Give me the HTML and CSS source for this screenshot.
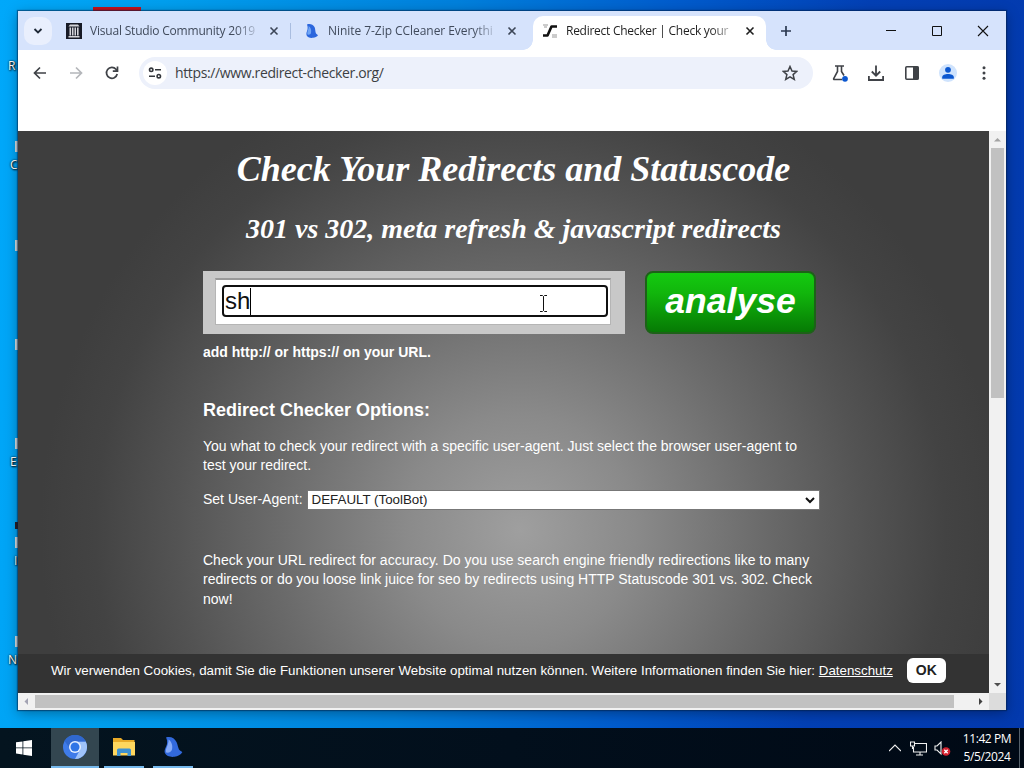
FILE: index.html
```
<!DOCTYPE html>
<html lang="en">
<head>
	<meta charset="utf-8">
	<title>Redirect Checker | Check your redirects</title>
	<link rel="stylesheet" href="styles.css">
</head>
<body>
	<div class="desktop">
		<div class="red-line"></div>
		<span class="label" style="top:58px;left:8px">R</span>
		<span class="label" style="top:157px;left:10px">C</span>
		<span class="label" style="top:454px;left:10px">E</span>
		<span class="label" style="top:553px;left:14px">I</span>
		<span class="label" style="top:652px;left:8px">N</span>
		<i class="sliver" style="top:141px"></i>
		<i class="sliver" style="top:240px"></i>
		<i class="sliver" style="top:339px"></i>
		<i class="sliver" style="top:438px"></i>
		<i class="sliver" style="top:537px"></i>
		<i class="sliver" style="top:636px"></i>
		<i class="sliver dark" style="top:522px"></i>

		<div class="window">
			<div class="tabs">
				<div class="tab-search"><svg width="10" height="10" viewBox="0 0 10 10"><path d="M1.5 3l3.500 3.500L8.500 3" fill="none" stroke="#1f2937" stroke-width="1.800"/></svg></div>
				<div class="tab tab1">
					<svg width="16" height="16" viewBox="0 0 16 16"><rect width="16" height="16" fill="#171a26"/><path d="M4 1.500h8l1.500 2h-11zM3.500 4.500h1.600v8H3.500zM6 4.500h1.500v8H6zM8.500 4.500H10v8H8.500zM11 4.500h1.600v8H11zM2.500 13h11v1.500h-11z" fill="#d5d5da"/></svg>
					<span class="title">Visual Studio Community 2019</span>
					<svg class="x" width="10" height="10" viewBox="0 0 10 10"><path d="M1.500 1.500l7 7M8.500 1.500l-7 7" stroke="#3c4657" stroke-width="1.600"/></svg>
				</div>
				<div class="tab tab2">
					<svg width="16" height="16" viewBox="0 0 16 16"><path d="M3 1.500C6 .5 9 1.500 10.500 4c.8 1.500.8 4.500 1.300 6 .4 1 1.700 1.500 2.200 2.200-1 1.500-3 2.300-5 2.600-3 .4-5.500-.5-6.300-2.300-.9-2 .3-4 .8-6C3.900 4.500 3.500 3 3 1.500z" fill="#2b66dd"/><path d="M4.500 3c2 1 3.200 4 2.500 7-.3 1.500-2 2-3.500 1.500C2.500 9 5.200 6 4.500 3z" fill="#6fa5f5"/></svg>
					<span class="title">Ninite 7-Zip CCleaner Everythi</span>
					<svg class="x" width="10" height="10" viewBox="0 0 10 10"><path d="M1.500 1.500l7 7M8.500 1.500l-7 7" stroke="#3c4657" stroke-width="1.600"/></svg>
				</div>
				<div class="tab tab3 active">
					<svg width="16" height="16" viewBox="0 0 16 16"><path d="M1 12.500h4.500L9.500 3.500H15" fill="none" stroke="#111" stroke-width="2.600" stroke-linejoin="round"/><path d="M1 2h5M2 4h3M10 12h5M10 14h5" stroke="#999" stroke-width="1.200"/></svg>
					<span class="title">Redirect Checker | Check your</span>
					<svg class="x" width="10" height="10" viewBox="0 0 10 10"><path d="M1.500 1.500l7 7M8.500 1.500l-7 7" stroke="#1f1f1f" stroke-width="1.600"/></svg>
				</div>
				<svg class="plus" width="12" height="12" viewBox="0 0 12 12"><path d="M6 1v10M1 6h10" stroke="#2c3a50" stroke-width="1.700"/></svg>
				<div class="controls">
					<svg width="12" height="12" viewBox="0 0 12 12"><path d="M1 5.500h10" stroke="#111"/></svg>
					<svg width="12" height="12" viewBox="0 0 12 12"><path d="M1.500 1.500h9v9h-9z" fill="none" stroke="#111"/></svg>
					<svg width="12" height="12" viewBox="0 0 12 12"><path d="M1 1l10 10M11 1L1 11" stroke="#111" stroke-width="1.100"/></svg>
				</div>
			</div>

			<div class="toolbar">
				<svg width="16" height="16" viewBox="0 0 16 16"><path d="M14 8H3M8 2.500L2.500 8 8 13.500" fill="none" stroke="#3f4247" stroke-width="1.700"/></svg>
				<svg width="16" height="16" viewBox="0 0 16 16"><path d="M2 8h11M8 2.500l5.500 5.500L8 13.500" fill="none" stroke="#b4b6ba" stroke-width="1.700"/></svg>
				<svg width="16" height="16" viewBox="0 0 16 16"><path d="M13.200 9A5.400 5.400 0 1 1 12 4.300L13.400 5.700M13.500 1.500v4.700H8.800" fill="none" stroke="#3f4247" stroke-width="1.700"/></svg>
				<div class="address">
					<div class="site-info"><svg width="14" height="14" viewBox="0 0 14 14"><g fill="none" stroke="#33363b" stroke-width="1.600"><circle cx="3.200" cy="3.800" r="1.700"/><path d="M7 3.800h6M1 10.200h6"/><circle cx="10.800" cy="10.200" r="1.700"/></g></svg></div>
					<span class="url">https://www.redirect-checker.org/</span>
					<svg width="16" height="16" viewBox="0 0 16 16"><path d="M8 1.500l2 4.500 4.800.4-3.700 3.200 1.200 4.800L8 11.900l-4.300 2.500 1.200-4.800L1.200 6.400 6 6z" fill="none" stroke="#3f4247" stroke-width="1.500"/></svg>
				</div>
				<div class="actions">
					<svg width="18" height="18" viewBox="0 0 18 18"><path d="M4 2h9M6.500 2v5.500L2.700 14.500q-.4 1 .7 1H11M10.500 2v5.500l2.500 4" fill="none" stroke="#3f4247" stroke-width="1.600"/><circle cx="14" cy="14.800" r="2.900" fill="#0b57d0"/></svg>
					<svg width="18" height="18" viewBox="0 0 18 18"><path d="M9 1.500v10M4.800 7.500L9 11.700l4.200-4.200M1.900 12v4h14.200v-4" fill="none" stroke="#3f4247" stroke-width="1.800"/></svg>
					<svg width="18" height="18" viewBox="0 0 18 18"><rect x="2.800" y="2.800" width="12.400" height="12.400" rx="1" fill="none" stroke="#3f4247" stroke-width="1.600"/><path d="M10 2.500h5.500v13H10z" fill="#3f4247"/></svg>
					<svg width="18" height="18" viewBox="0 0 18 18"><circle cx="9" cy="9" r="9" fill="#cfe3fd"/><circle cx="9" cy="5.800" r="2.900" fill="#0b57d0"/><path d="M3.200 14.800v-1.500c0-4.300 11.600-4.300 11.600 0v1.500z" fill="#0b57d0"/></svg>
					<svg width="18" height="18" viewBox="0 0 18 18"><g fill="#3f4247"><circle cx="9" cy="3.700" r="1.500"/><circle cx="9" cy="9" r="1.500"/><circle cx="9" cy="14.300" r="1.500"/></g></svg>
				</div>
			</div>

			<div class="view">
				<div class="page">
					<div class="content">
						<h1>Check Your Redirects and Statuscode</h1>
						<h2>301 vs 302, meta refresh &amp; javascript redirects</h2>
						<div class="form">
							<div class="field"><div class="field-inner"><div class="input">sh<span class="caret"></span>
								<svg class="mouse" width="9" height="17" viewBox="0 0 9 17"><path d="M1 .5h2.500l1 1 1-1H8M4.500 1.500v14M1 16.500h2.500l1-1 1 1H8" fill="none" stroke="#111"/></svg>
							</div></div></div>
							<div class="analyse">analyse</div>
						</div>
						<div class="note">add http:// or https:// on your URL.</div>
						<h3>Redirect Checker Options:</h3>
						<p>You what to check your redirect with a specific user-agent. Just select the browser user-agent to<br>test your redirect.</p>
						<div class="agent">
							<span>Set User-Agent:</span>
							<div class="select">DEFAULT (ToolBot)<svg width="10" height="8" viewBox="0 0 10 8"><path d="M1 2l4 4 4-4" fill="none" stroke="#111" stroke-width="2"/></svg></div>
						</div>
						<p>Check your URL redirect for accuracy. Do you use search engine friendly redirections like to many<br>redirects or do you loose link juice for seo by redirects using HTTP Statuscode 301 vs. 302. Check<br>now!</p>
					</div>
					<div class="cookies">
						<span class="cookie-text">Wir verwenden Cookies, damit Sie die Funktionen unserer Website optimal nutzen können. Weitere Informationen finden Sie hier: <a>Datenschutz</a></span>
						<span class="ok">OK</span>
					</div>
				</div>
				<div class="vscroll">
					<svg width="17" height="17" viewBox="0 0 17 17"><path d="M5 10.500L8.500 7l3.500 3.500z" fill="#a3a3a3"/></svg>
					<div class="vthumb"></div>
					<svg width="17" height="17" viewBox="0 0 17 17"><path d="M5 7l3.500 3.500L12 7z" fill="#505050"/></svg>
				</div>
			</div>
			<div class="hscroll">
				<svg width="17" height="17" viewBox="0 0 17 17"><path d="M10 5L6.500 8.500 10 12z" fill="#a3a3b3"/></svg>
				<div class="hthumb"></div>
				<svg width="17" height="17" viewBox="0 0 17 17"><path d="M7 5l3.500 3.500L7 12z" fill="#404040"/></svg>
				<div class="corner"></div>
			</div>
		</div>
	</div>

	<div class="taskbar">
		<div class="start"><svg width="16" height="16" viewBox="0 0 16 16"><path d="M0 2.300L6.500 1.400v6.100H0zM7.300 1.300L16 0v7.500H7.300zM0 8.300h6.500v6.200L0 13.600zM7.300 8.300H16V16l-8.700-1.300z" fill="#fff"/></svg></div>
		<div class="app current"><svg width="24" height="24" viewBox="0 0 24 24"><circle cx="12" cy="12" r="12" fill="#3f7be8"/><path d="M12 6.500h10.700A12 12 0 0 1 12 24l5-9.200z" fill="#9fc3fa"/><path d="M1.600 6A12 12 0 0 1 22.700 6.500H12A6 6 0 0 0 6.500 13z" fill="#3068cf"/><circle cx="12" cy="12" r="6" fill="#e6f0ff"/><circle cx="12" cy="12" r="4.500" fill="#2f75e6"/></svg></div>
		<div class="app"><svg width="22" height="20" viewBox="0 0 22 20"><path d="M0 1h8l2 2h11.500v15H0z" fill="#e9ab28"/><path d="M0 5h22v13.500H0z" fill="#ffd75e"/><path d="M4 19v-6q0-1.500 1.500-1.500h11Q18 11.500 18 13v6h-3.500v-3h-7v3z" fill="#3f92d2"/></svg></div>
		<div class="app"><svg width="22" height="22" viewBox="0 0 22 22"><path d="M4 1.500C8.500 0 12.500 2 14.500 6c1.200 2.500 1.500 5.500 2.500 7.500.7 1.200 2.700 1.700 3.300 2.800-1.500 2.500-4.500 4-7.800 4.500-4.500.5-8.300-.8-9.500-3.500-1.200-3 .8-5.500 1.800-8.500C5.500 6 5 3.500 4 1.500z" fill="#3269dc"/><path d="M6.500 3.500c3 2 4.500 6 3.500 10-.5 2.500-3 3.500-6 3C3 12.500 7 8.500 6.500 3.500z" fill="#86aaf6"/></svg></div>
		<div class="tray">
			<svg width="12" height="12" viewBox="0 0 12 12"><path d="M0 9l6-6 6 6" fill="none" stroke="#f0f0f0" stroke-width="1.200"/></svg>
			<svg width="17" height="15" viewBox="0 0 17 15"><path d="M5 2.500h11.500v8.500H3.500V6M10 11v3M6 14h7M.5 1h4v4h-4zM2.500 5v3" fill="none" stroke="#f0f0f0" stroke-width="1.100"/></svg>
			<svg width="17" height="15" viewBox="0 0 17 15"><path d="M1 5h2l4-4v12L3 9H1z" fill="none" stroke="#f0f0f0" stroke-width="1.100"/><circle cx="12" cy="10.500" r="4.300" fill="#d5202e"/><path d="M10.300 8.800l3.400 3.400M13.700 8.800l-3.400 3.400" stroke="#fff" stroke-width="1.300"/></svg>
		</div>
		<div class="clock"><span>11:42 PM</span><span>5/5/2024</span></div>
		<div class="peek"></div>
	</div>
</body>
</html>
```
FILE: styles.css
```
* {
	box-sizing: border-box;
}
body {
	margin: 0;
	width: 1024px;
	height: 768px;
	overflow: hidden;
	display: flex;
	flex-direction: column;
	font-family: "Liberation Sans", Arial, sans-serif;
}
svg {
	display: block;
	flex: none;
}
h1, h2, h3, p {
	margin: 0;
}
.desktop {
	position: relative;
	height: 728px;
	padding: 11px 18px 18px;
	background: linear-gradient(95deg, #00a8fa 0%, #009fee 15%, #0080dc 42%, #005ccd 62%, #0340b5 80%, #0339ad 100%);
}
.label {
	position: absolute;
	font: 12px/16px "Open Sans", sans-serif;
	color: #fff;
	text-shadow: 1px 1px 2px #000, 0 0 2px #000;
}
.sliver {
	position: absolute;
	left: 15px;
	width: 3px;
	height: 11px;
	background: #d5dde0;
}
.sliver.dark {
	background: #2a2026;
	height: 7px;
}
.red-line {
	position: absolute;
	left: 93px;
	top: 7px;
	width: 48px;
	height: 4px;
	background: #c4121d;
}
.window {
	position: relative;
	height: 699px;
	display: flex;
	flex-direction: column;
	background: #fff;
	box-shadow: 0 0 1px 1px rgba(0, 30, 70, .5), 0 3px 12px rgba(0, 0, 0, .35);
}

/* tab strip */
.tabs {
	height: 39px;
	display: flex;
	align-items: center;
	background: #d6e3fc;
	font: 12px/16px "Open Sans", "Noto Sans", sans-serif;
	color: #414b5c;
}
.tab-search {
	width: 28px;
	height: 28px;
	margin-left: 6px;
	border-radius: 10px;
	background: #e9effd;
	display: flex;
	align-items: center;
	justify-content: center;
}
.tab {
	display: flex;
	align-items: center;
	height: 34px;
}
.tab .title {
	width: 167px;
	margin-left: 8px;
	white-space: nowrap;
	letter-spacing: -.26px;
	-webkit-mask-image: linear-gradient(90deg, #000 145px, transparent 172px);
	mask-image: linear-gradient(90deg, #000 145px, transparent 172px);
}
.tab .x {
	margin-left: 12px;
}
.tab1 {
	width: 239px;
	padding-left: 14px;
	height: 16px;
	border-right: 1px solid #a9bde0;
}
.tab1 .title {
	letter-spacing: -.2px;
}
.tab2 {
	width: 242px;
	padding-left: 13px;
}
.tab2 .title {
	letter-spacing: -.05px;
}
.tab.active {
	position: relative;
	width: 233px;
	align-self: flex-end;
	padding: 0 0 4px 9px;
	background: #fff;
	border-radius: 10px 10px 0 0;
	color: #1f1f1f;
}
.active::before, .active::after {
	content: "";
	position: absolute;
	bottom: 0;
	left: -10px;
	width: 10px;
	height: 10px;
	background: radial-gradient(circle at 0 0, transparent 9.5px, #fff 10px);
}
.active::after {
	left: auto;
	right: -10px;
	background: radial-gradient(circle at 100% 0, transparent 9.5px, #fff 10px);
}
.plus {
	margin-left: 14px;
}
.controls {
	margin-left: auto;
	display: flex;
	gap: 34px;
	padding-right: 17px;
}

/* toolbar */
.toolbar {
	height: 81px;
	padding: 7px 12px 0 14px;
	display: flex;
	align-items: flex-start;
}
.toolbar > svg {
	margin: 8px 20px 0 0;
}
.address {
	width: 674px;
	height: 32px;
	margin-left: -1px;
	padding: 0 15px 0 4px;
	border-radius: 16px;
	background: #edf1fb;
	display: flex;
	align-items: center;
}
.site-info {
	width: 24px;
	height: 24px;
	border-radius: 12px;
	background: #fff;
	display: flex;
	align-items: center;
	justify-content: center;
}
.url {
	flex: 1;
	margin-left: 8px;
	font: 14px/18px "Open Sans", "Noto Sans", sans-serif;
	letter-spacing: -.37px;
	color: #3c3f44;
}
.actions {
	display: flex;
	gap: 18px;
	margin: 7px 0 0 18px;
}

/* web page */
.view {
	height: 562px;
	display: flex;
}
.page {
	width: 971px;
	display: flex;
	flex-direction: column;
	background: radial-gradient(circle at 502px 399px, #9f9f9f 0, #8a8a8a 115px, #6a6a6a 245px, #535353 345px, #434343 425px, #3e3e3e 480px);
	color: #fff;
}
.content {
	height: 523px;
	width: 621px;
	margin-left: 185px;
	padding-top: 17px;
	font-size: 14px;
	line-height: 19.5px;
	white-space: nowrap;
}
h1, h2 {
	font-family: "Liberation Serif", "Times New Roman", serif;
	font-style: italic;
	text-align: center;
}
h1 {
	font-size: 36px;
	line-height: 42px;
}
h2 {
	font-size: 28px;
	line-height: 34px;
	margin-top: 22px;
}
.form {
	display: flex;
	margin-top: 25px;
}
.field {
	width: 422px;
	height: 63px;
	padding: 7px 14px 8px 12px;
	background: #c8c8c8;
}
.field-inner {
	height: 47px;
	padding: 5px 2px 0 6px;
	background: #fff;
	border: 1px solid #b5b5b5;
	border-top: 2px solid #999;
}
.input {
	position: relative;
	height: 32px;
	display: flex;
	align-items: center;
	border: 2px solid #101010;
	border-radius: 4px;
	padding-left: 1px;
	font-size: 24px;
	color: #111;
}
.caret {
	width: 1px;
	height: 27px;
	background: #000;
}
.mouse {
	position: absolute;
	left: 315px;
	top: 8px;
}
.analyse {
	width: 171px;
	height: 63px;
	margin-left: 20px;
	border: 2px solid #1d6218;
	border-radius: 8px;
	background: linear-gradient(#14ca10, #11b50c 35%, #067a04 100%);
	font-size: 35.5px;
	line-height: 56px;
	font-weight: bold;
	font-style: italic;
	text-align: center;
}
.note {
	margin-top: 9px;
	font-size: 14px;
	font-weight: bold;
}
h3 {
	margin: 35px 0 15px;
	font-size: 18px;
	line-height: 24px;
}
.agent {
	display: flex;
	align-items: center;
	height: 20px;
	margin: 14px 0 41px;
}
.select {
	width: 513px;
	height: 20px;
	margin-left: 4px;
	padding: 0 4px 0 4px;
	display: flex;
	align-items: center;
	justify-content: space-between;
	background: #fff;
	border: 1px solid #777;
	font-size: 13.333px;
	color: #222;
}
.cookies {
	height: 39px;
	padding: 0 0 6px 33px;
	display: flex;
	align-items: center;
	background: #333;
	font-size: 13.333px;
	white-space: nowrap;
}
.cookies a {
	text-decoration: underline;
}
.ok {
	width: 39px;
	height: 25px;
	margin-left: 14px;
	border-radius: 6px;
	background: #fff;
	color: #222;
	font-size: 14px;
	line-height: 24px;
	font-weight: bold;
	text-align: center;
}

/* scrollbars */
.vscroll {
	width: 17px;
	background: #f1f1f1;
	display: flex;
	flex-direction: column;
}
.vthumb {
	width: 13px;
	height: 250px;
	margin: 0 2px auto;
	background: #c1c1c1;
}
.hscroll {
	height: 17px;
	display: flex;
	background: #f1f1f1;
}
.hthumb {
	width: 919px;
	height: 13px;
	margin: 2px auto 0 0;
	background: #c1c1c1;
}
.corner {
	width: 17px;
	background: #dcdcdc;
}

/* taskbar */
.taskbar {
	height: 40px;
	display: flex;
	background: linear-gradient(90deg, #04141f, #020f1c 50%, #000915);
	color: #fff;
}
.start {
	width: 51px;
	padding: 12px 0 0 16px;
}
.app {
	width: 40px;
	height: 40px;
	margin-left: 9px;
	display: flex;
	align-items: center;
	justify-content: center;
	border-bottom: 2px solid #76b9ed;
}
.app.current {
	width: 48px;
	margin: 0 -4px 0 0;
	background: #334650;
}
.tray {
	margin-left: auto;
	display: flex;
	align-items: center;
	gap: 9px;
}
.tray svg + svg + svg {
	margin-left: -2px;
}
.clock {
	width: 68px;
	padding: 2px 0 0 4px;
	display: flex;
	flex-direction: column;
	align-items: center;
	font: 12px/18px "Open Sans", "Noto Sans", sans-serif;
	letter-spacing: -.4px;
}
.peek {
	width: 5px;
	border-left: 1px solid #55606a;
}
```
